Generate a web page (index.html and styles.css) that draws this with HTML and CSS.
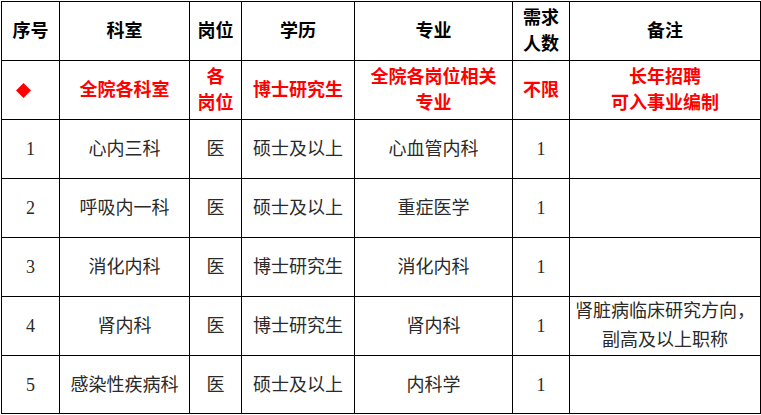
FILE: index.html
```html
<!DOCTYPE html>
<html lang="zh-CN">
<head>
<meta charset="utf-8">
<link rel="stylesheet" href="styles.css">
</head>
<body>
<table class="grid">
  <colgroup>
    <col class="c1"><col class="c2"><col class="c3"><col class="c4"><col class="c5"><col class="c6"><col class="c7">
  </colgroup>
  <thead>
    <tr class="head">
      <th>序号</th><th>科室</th><th>岗位</th><th>学历</th><th>专业</th><th>需求<br>人数</th><th>备注</th>
    </tr>
  </thead>
  <tbody>
    <tr class="hl">
      <td class="mark"><svg width="15" height="15" viewBox="0 0 15 15"><polygon points="7.5,0 15,7.5 7.5,15 0,7.5" fill="#ff0000"/></svg></td>
      <td>全院各科室</td>
      <td>各<br>岗位</td>
      <td>博士研究生</td>
      <td>全院各岗位相关<br>专业</td>
      <td>不限</td>
      <td>长年招聘<br>可入事业编制</td>
    </tr>
    <tr>
      <td>1</td><td>心内三科</td><td>医</td><td>硕士及以上</td><td>心血管内科</td><td>1</td><td></td>
    </tr>
    <tr>
      <td>2</td><td>呼吸内一科</td><td>医</td><td>硕士及以上</td><td>重症医学</td><td>1</td><td></td>
    </tr>
    <tr>
      <td>3</td><td>消化内科</td><td>医</td><td>博士研究生</td><td>消化内科</td><td>1</td><td></td>
    </tr>
    <tr>
      <td>4</td><td>肾内科</td><td>医</td><td>博士研究生</td><td>肾内科</td><td>1</td><td class="note">肾脏病临床研究方向，<br>副高及以上职称</td>
    </tr>
    <tr class="last">
      <td>5</td><td>感染性疾病科</td><td>医</td><td>硕士及以上</td><td>内科学</td><td>1</td><td></td>
    </tr>
  </tbody>
</table>
</body>
</html>
```

FILE: styles.css
```css
html, body {
  margin: 0;
  padding: 0;
  background: #ffffff;
}

.grid {
  margin: 1px 0 0 1px;
  border-collapse: collapse;
  table-layout: fixed;
  width: 759px;
  font-family: "Liberation Serif", "Noto Sans CJK SC", serif;
  font-size: 18px;
  color: #2a2a2a;
}

.c1 { width: 58px; }
.c2 { width: 130px; }
.c3 { width: 52px; }
.c4 { width: 113px; }
.c5 { width: 158px; }
.c6 { width: 57px; }
.c7 { width: 191px; }

.grid th,
.grid td {
  border: 1px solid #000000;
  padding: 0;
  text-align: center;
  vertical-align: middle;
  height: 58px;
  line-height: 26px;
}

.grid th {
  font-weight: 700;
  color: #000000;
}

.hl td {
  color: #ff0000;
  font-weight: 700;
}

.mark {
  text-align: left !important;
  padding-left: 14px !important;
}

.mark svg {
  display: block;
}

.note {
  line-height: 29px !important;
}

.last td {
  height: 57px;
}
```
